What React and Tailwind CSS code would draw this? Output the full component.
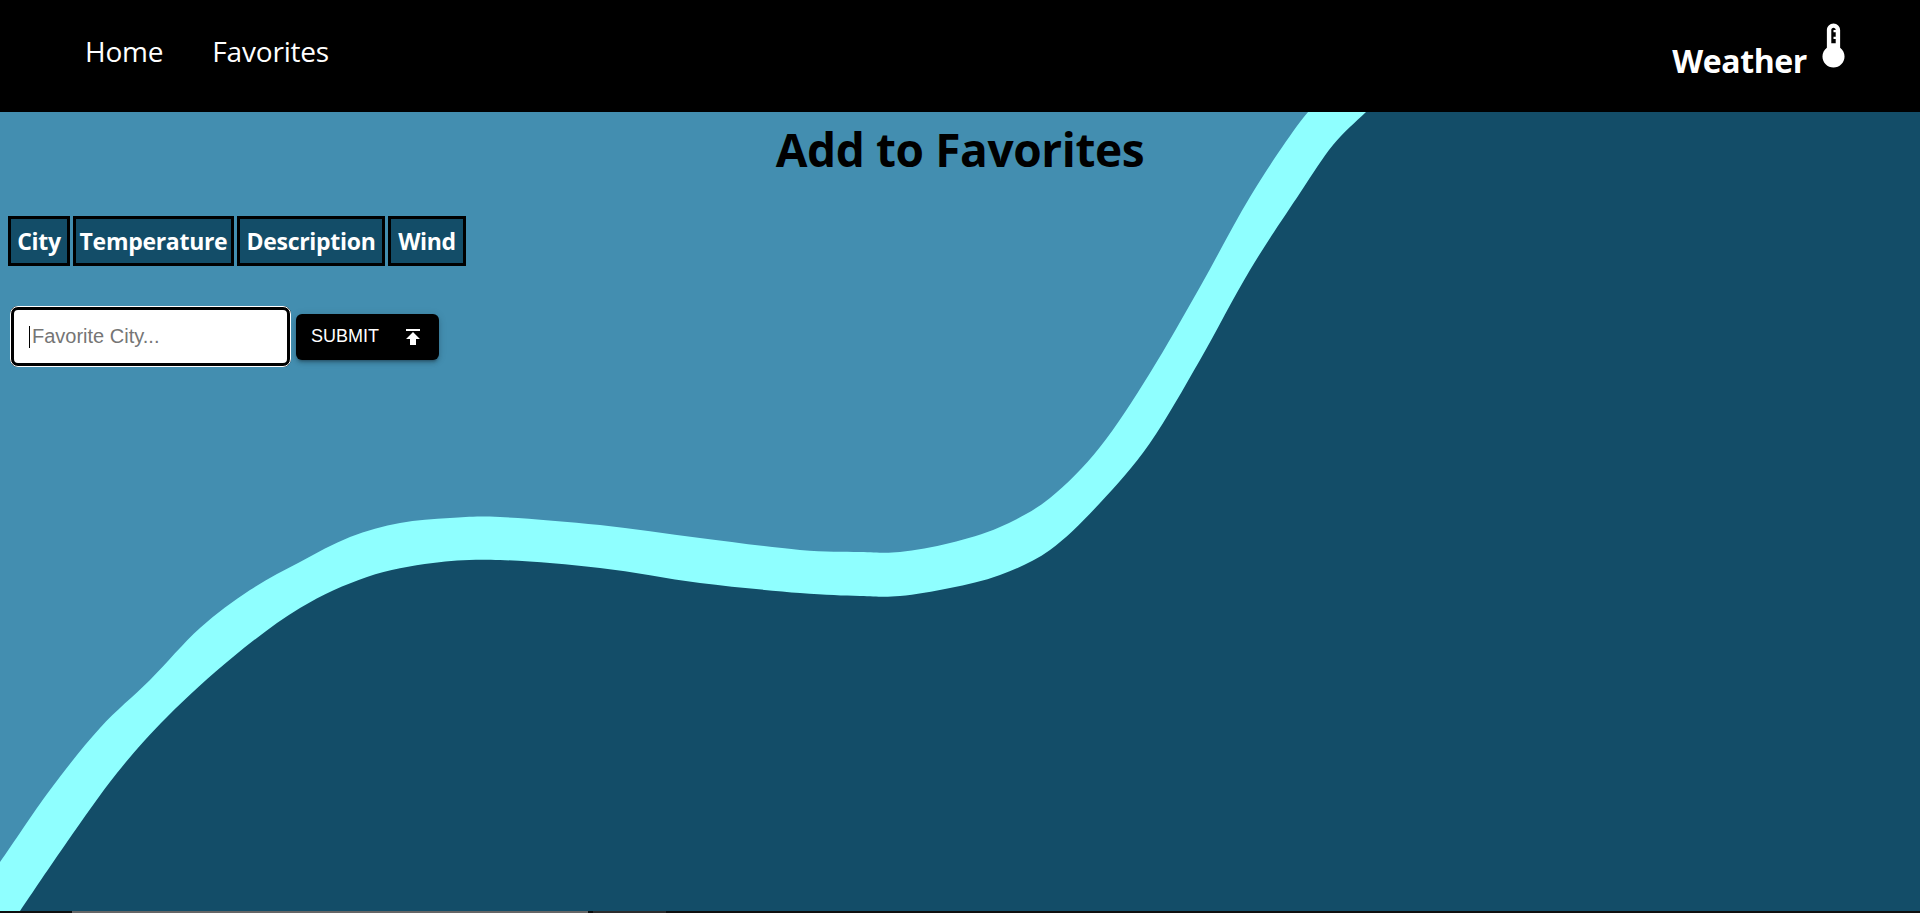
import { useMemo } from "react";

const upperEdge = [
  [-20, 888], [0, 862], [50, 790], [100, 728], [150, 680], [200, 628], [250, 590], [300, 562],
  [350, 537], [400, 523], [450, 518], [500, 517], [600, 525], [700, 538], [800, 550],
  [860, 552], [900, 552], [950, 543], [1000, 527], [1050, 498], [1100, 447], [1150, 373],
  [1200, 287], [1250, 197], [1300, 122], [1330, 90],
];

const lowerEdge = [
  [0, 940], [20, 911], [67, 842], [117, 773], [167, 717], [233, 657], [300, 608], [367, 577],
  [433, 563], [500, 560], [600, 568], [700, 583], [800, 593], [860, 596], [900, 596],
  [950, 588], [1000, 575], [1050, 550], [1100, 503], [1150, 443], [1200, 360], [1250, 270],
  [1300, 193], [1333, 145], [1366, 112], [1400, 80],
];

// catmull-rom through the traced points, shifted up by the nav height
const smoothPath = (pts) => {
  const p = pts.map(([x, y]) => [x, y - 112]);
  let d = `M${p[0][0]} ${p[0][1]}`;
  for (let i = 0; i < p.length - 1; i++) {
    const a = p[i - 1] || p[i];
    const b = p[i];
    const c = p[i + 1];
    const e = p[i + 2] || c;
    const c1 = [b[0] + (c[0] - a[0]) / 6, b[1] + (c[1] - a[1]) / 6];
    const c2 = [c[0] - (e[0] - b[0]) / 6, c[1] - (e[1] - b[1]) / 6];
    d += `C${c1[0]} ${c1[1]} ${c2[0]} ${c2[1]} ${c[0]} ${c[1]}`;
  }
  return d;
};

const Wave = () => {
  const band = useMemo(() => `${smoothPath(upperEdge)}L1920 -20L1920 820L-20 820Z`, []);
  const dark = useMemo(() => `${smoothPath(lowerEdge)}L1920 -40L1920 820L-20 820Z`, []);
  return (
    <svg className="absolute inset-0 w-full h-full" viewBox="0 0 1920 799" aria-hidden="true">
      <path d={band} fill="#8fffff" />
      <path d={dark} fill="#134d68" />
    </svg>
  );
};

const columns = [
  { label: "City", width: "w-[62px]" },
  { label: "Temperature", width: "w-[161px]" },
  { label: "Description", width: "w-[148px]" },
  { label: "Wind", width: "w-[78px]" },
];

const App = () => {
  return (
    <div className="h-[913px] overflow-hidden flex flex-col font-['Open_Sans',sans-serif]">
      <nav className="h-[112px] bg-black text-white flex items-center justify-between pl-[85px] pr-[60px] shrink-0">
        <ul className="flex gap-[49px] text-[28px] leading-none -mt-[10px] tracking-[-0.2px]">
          <li>Home</li>
          <li>Favorites</li>
        </ul>
        <div className="flex items-center">
          <span className="text-[32px] font-bold tracking-[-0.4px] mt-[9px]">Weather</span>
          <svg className="w-[53px] h-[53px] -mt-[21px]" viewBox="0 0 24 24" fill="currentColor">
            <path d="M15 13V5c0-1.66-1.34-3-3-3S9 3.34 9 5v8c-1.21.91-2 2.37-2 4 0 2.76 2.24 5 5 5s5-2.24 5-5c0-1.63-.79-3.09-2-4zm-4-8c0-.55.45-1 1-1s1 .45 1 1h-1v1h1v2h-1v1h1v2h-2V5z" />
          </svg>
        </div>
      </nav>

      <main className="relative flex-1 bg-[#438eb0]">
        <Wave />
        <div className="relative">
          <h1 className="text-[46px] leading-[62px] font-bold text-black text-center tracking-[-0.4px] mt-[6px]">
            Add to Favorites
          </h1>
          <table className="table-fixed border-separate border-spacing-[3px] ml-[5px] mt-[33px]">
            <thead>
              <tr>
                {columns.map((c) => (
                  <th
                    key={c.label}
                    className={`${c.width} h-[50px] p-0 border-[3px] border-black bg-[#134d68] text-white text-[23px] font-bold text-center tracking-[-0.3px]`}
                  >
                    {c.label}
                  </th>
                ))}
              </tr>
            </thead>
          </table>
          <form className="flex items-center ml-[10px] mt-[37px] gap-[5px]">
            <div className="relative">
              <input
                type="text"
                placeholder="Favorite City..."
                className="block w-[281px] h-[61px] pl-[18px] bg-white rounded-[8px] border-[4px] border-black outline outline-1 -outline-offset-1 outline-white text-[20px] text-black font-['Liberation_Sans',sans-serif] placeholder:text-[#757575]"
              />
              <span className="absolute left-[19px] top-[20px] w-px h-[22px] bg-black" />
            </div>
            <button
              type="button"
              className="flex items-center justify-between w-[143px] h-[46px] pl-[15px] pr-[14px] bg-black text-white rounded-[6px] text-[18px] font-['Liberation_Sans',sans-serif] shadow-[0_3px_3px_-2px_rgba(0,0,0,0.3),0_3px_4px_0_rgba(0,0,0,0.14),0_1px_8px_0_rgba(0,0,0,0.12)]"
            >
              SUBMIT
              <svg className="w-[24px] h-[24px]" viewBox="0 0 24 24" fill="currentColor">
                <path d="M5 4v2h14V4H5zm0 10h4v6h6v-6h4l-7-7-7 7z" />
              </svg>
            </button>
          </form>
        </div>
      </main>

      <div className="h-[2px] shrink-0 bg-[#0f0f0f] flex">
        <div className="ml-[72px] w-[516px] bg-[#666666]" />
        <div className="ml-[5px] w-[73px] bg-[#2d2d2d]" />
      </div>
    </div>
  );
};

export default App;
